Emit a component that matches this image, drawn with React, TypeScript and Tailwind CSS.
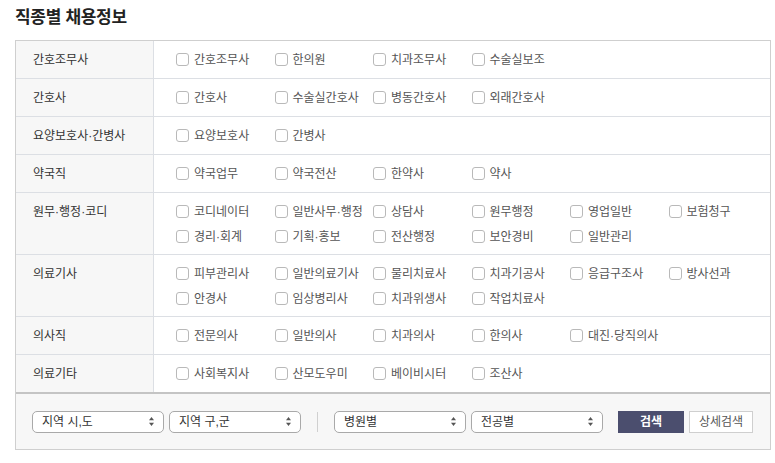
// App.tsx
// 직종별 채용정보 검색 패널

const rows: { label: string; items: string[] }[] = [
  { label: "간호조무사", items: ["간호조무사", "한의원", "치과조무사", "수술실보조"] },
  { label: "간호사", items: ["간호사", "수술실간호사", "병동간호사", "외래간호사"] },
  { label: "요양보호사·간병사", items: ["요양보호사", "간병사"] },
  { label: "약국직", items: ["약국업무", "약국전산", "한약사", "약사"] },
  {
    label: "원무·행정·코디",
    items: ["코디네이터", "일반사무·행정", "상담사", "원무행정", "영업일반", "보험청구", "경리·회계", "기획·홍보", "전산행정", "보안경비", "일반관리"],
  },
  {
    label: "의료기사",
    items: ["피부관리사", "일반의료기사", "물리치료사", "치과기공사", "응급구조사", "방사선과", "안경사", "임상병리사", "치과위생사", "작업치료사"],
  },
  { label: "의사직", items: ["전문의사", "일반의사", "치과의사", "한의사", "대진·당직의사"] },
  { label: "의료기타", items: ["사회복지사", "산모도우미", "베이비시터", "조산사"] },
];

// 위아래 화살표 (select 모양)
function Arrows() {
  return (
    <svg width="7" height="11" viewBox="0 0 7 11" className="shrink-0">
      <path d="M3.5 1 L6 4.2 H1 Z" fill="#555" />
      <path d="M3.5 10 L6 6.8 H1 Z" fill="#555" />
    </svg>
  );
}

function Select({ text }: { text: string }) {
  return (
    <div className="flex h-[22px] w-[132px] items-center justify-between rounded-[5px] border border-[#a9a9a9] bg-white pl-[9px] pr-[8px] text-[12px] text-[#333]">
      <span>{text}</span>
      <Arrows />
    </div>
  );
}

function Check({ text }: { text: string }) {
  return (
    <label className="flex h-[25px] items-center gap-[5px] whitespace-nowrap text-[12px] text-[#555]">
      <span className="h-[13px] w-[13px] shrink-0 rounded-[3px] border border-[#b9b9b9] bg-white" />
      <span>{text}</span>
    </label>
  );
}

export default function App() {
  return (
    <div
      className="min-h-[463px] w-[775px] bg-white px-[15px] pt-[8px]"
      style={{ fontFamily: '"Liberation Sans", "Noto Sans CJK KR", sans-serif' }}
    >
      <h2 className="h-[32px] text-[17px] font-bold leading-[20px] tracking-[-0.3px] text-[#222]">
        직종별 채용정보
      </h2>

      <div className="w-[756px] border border-[#cfcfcf]">
        {rows.map((row, i) => (
          <div
            key={row.label}
            className={
              i === rows.length - 1
                ? "flex border-b-2 border-[#c4c4c4]"
                : "flex border-b border-[#dcdfe4]"
            }
          >
            <div className="w-[138px] shrink-0 border-r border-[#dcdfe4] bg-[#f7f7f7] pl-[17px] pt-[6px] text-[12px] text-[#333]">
              <div className="flex h-[25px] items-center">{row.label}</div>
            </div>
            <div
              className={
                row.items.length > 6
                  ? "grid flex-1 grid-cols-[repeat(6,98.5px)] pt-[6px] pb-[5px] pl-[22px]"
                  : "grid flex-1 grid-cols-[repeat(6,98.5px)] py-[6px] pl-[22px]"
              }
            >
              {row.items.map((it) => (
                <Check key={it} text={it} />
              ))}
            </div>
          </div>
        ))}

        {/* 하단 검색 영역 */}
        <div className="flex h-[55px] items-center bg-[#f7f7f7] pl-[16px]">
          <div className="flex gap-[5px]">
            <Select text="지역 시,도" />
            <Select text="지역 구,군" />
          </div>
          <div className="mx-[16px] h-[20px] w-px bg-[#d0d0d0]" />
          <div className="flex gap-[5px]">
            <Select text="병원별" />
            <Select text="전공별" />
          </div>
          <button className="ml-[15px] h-[22px] w-[66px] bg-[#4b4e6e] text-[12px] font-bold text-white">
            검색
          </button>
          <button className="ml-[5px] h-[22px] w-[64px] border border-[#cfcfcf] bg-white text-[12px] text-[#555]">
            상세검색
          </button>
        </div>
      </div>
    </div>
  );
}
